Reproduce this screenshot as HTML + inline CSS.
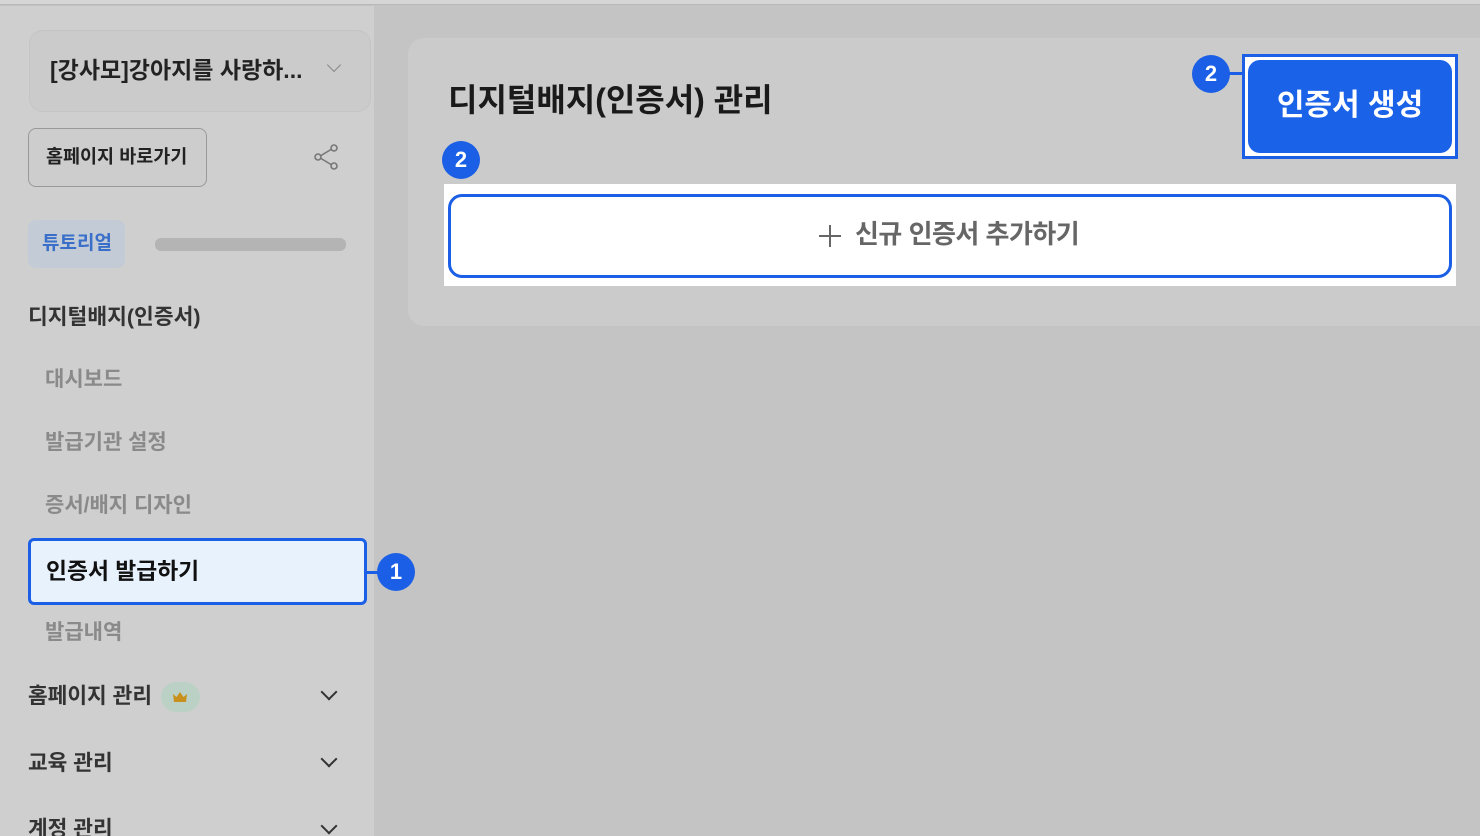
<!DOCTYPE html>
<html><head><meta charset="utf-8"><style>
*{box-sizing:border-box;margin:0;padding:0}
html,body{width:1480px;height:836px;overflow:hidden}
body{background:#c4c4c4;font-family:"Liberation Sans","Noto Sans CJK KR",sans-serif;position:relative}
.top{position:absolute;left:0;top:0;width:1480px;height:5px;background:#d6d6d6;border-bottom:1px solid #b8b8b8}
.side{position:absolute;left:0;top:6px;width:374px;height:830px;background:#cfcfcf}
.a{position:absolute}
.sel{left:29px;top:30px;width:342px;height:82px;border:1px solid #c4c4c4;border-radius:14px;background:#cbcbcb}
.t{position:absolute;white-space:nowrap;line-height:1.2}
.badge{position:absolute;width:38px;height:38px;border-radius:50%;background:#1a5fe6;color:#fff;font-weight:700;font-size:22px;text-align:center;line-height:38px}
.chev{position:absolute;width:12px;height:12px;border-right:2px solid #333;border-bottom:2px solid #333;transform:rotate(45deg)}
</style></head><body>
<div class="top"></div>
<div class="side"></div>
<div class="a sel"></div>
<div class="t" style="left:50px;top:57px;font-size:23px;font-weight:700;color:#222">[강사모]강아지를 사랑하...</div>
<div class="chev" style="left:329px;top:60px;width:10px;height:10px;border-color:#888;border-width:1.5px"></div>
<div class="a" style="left:28px;top:128px;width:179px;height:59px;border:1px solid #999;border-radius:8px;background:#cdcdcd"></div>
<div class="t" style="left:46px;top:146px;font-size:18.5px;font-weight:700;color:#222">홈페이지 바로가기</div>
<svg class="a" style="left:311px;top:142px" width="30" height="30" viewBox="0 0 30 30" fill="none" stroke="#777" stroke-width="1.6"><circle cx="23" cy="6" r="3"/><circle cx="7" cy="15" r="3"/><circle cx="23" cy="24" r="3"/><path d="M10 13.5L20 7.5M10 16.5L20 22.5"/></svg>
<div class="a" style="left:28px;top:220px;width:97px;height:48px;border-radius:8px;background:#c3ccd6"></div>
<div class="t" style="left:42px;top:233px;font-size:19px;font-weight:700;color:#3a6fc9">튜토리얼</div>
<div class="a" style="left:155px;top:238px;width:191px;height:13px;border-radius:6px;background:#b4b4b4"></div>
<div class="t" style="left:28px;top:305px;font-size:21.5px;font-weight:700;color:#333">디지털배지(인증서)</div>
<div class="t" style="left:45px;top:367px;font-size:21px;font-weight:700;color:#8a8a8a">대시보드</div>
<div class="t" style="left:45px;top:430px;font-size:21px;font-weight:700;color:#8a8a8a">발급기관 설정</div>
<div class="t" style="left:45px;top:493px;font-size:21px;font-weight:700;color:#8a8a8a">증서/배지 디자인</div>
<div class="a" style="left:28px;top:538px;width:339px;height:67px;border:3px solid #1a5fe6;border-radius:6px;background:#e8f2fd"></div>
<div class="t" style="left:46px;top:558px;font-size:22.8px;font-weight:700;color:#111">인증서 발급하기</div>
<div class="a" style="left:367px;top:571px;width:12px;height:3px;background:#1a5fe6"></div>
<div class="badge" style="left:377px;top:553px">1</div>
<div class="t" style="left:45px;top:620px;font-size:21px;font-weight:700;color:#8a8a8a">발급내역</div>
<div class="t" style="left:28px;top:684px;font-size:21.4px;font-weight:700;color:#333">홈페이지 관리</div>
<div class="a" style="left:161px;top:682px;width:39px;height:30px;border-radius:15px;background:#bcd1c6"></div>
<svg class="a" style="left:172px;top:690px" width="16" height="13" viewBox="0 0 16 13"><path d="M1 4L4.5 7L8 2L11.5 7L15 4L14 12H2Z" fill="#c8901c"/></svg>
<div class="chev" style="left:323px;top:686px"></div>
<div class="t" style="left:28px;top:751px;font-size:21.4px;font-weight:700;color:#333">교육 관리</div>
<div class="chev" style="left:323px;top:753px"></div>
<div class="t" style="left:28px;top:817px;font-size:21.4px;font-weight:700;color:#333">계정 관리</div>
<div class="chev" style="left:323px;top:820px"></div>

<div class="a" style="left:408px;top:38px;width:1100px;height:288px;border-radius:16px;background:#cbcbcb"></div>
<div class="t" style="left:448px;top:81px;font-size:32px;font-weight:700;color:#1a1a1a">디지털배지(인증서) 관리</div>
<div class="badge" style="left:1192px;top:55px">2</div>
<div class="a" style="left:1229px;top:72px;width:14px;height:3px;background:#1a5fe6"></div>
<div class="a" style="left:1242px;top:54px;width:216px;height:105px;border:3px solid #1a5fe6;background:#fff"></div>
<div class="a" style="left:1248px;top:60px;width:204px;height:93px;border-radius:12px;background:#1a62e8"></div>
<div class="t" style="left:1248px;top:88px;width:204px;text-align:center;font-size:30px;font-weight:700;color:#fff">인증서 생성</div>
<div class="badge" style="left:442px;top:141px">2</div>
<div class="a" style="left:444px;top:184px;width:1012px;height:102px;background:#fff"></div>
<div class="a" style="left:448px;top:194px;width:1004px;height:84px;border:3px solid #1a5fe6;border-radius:14px;background:#fff"></div>
<svg class="a" style="left:818px;top:224px" width="24" height="24" viewBox="0 0 24 24" stroke="#666" stroke-width="2"><path d="M12 1V23M1 12H23"/></svg>
<div class="t" style="left:855px;top:219px;font-size:26px;font-weight:700;color:#666;letter-spacing:-0.5px">신규 인증서 추가하기</div>
</body></html>
